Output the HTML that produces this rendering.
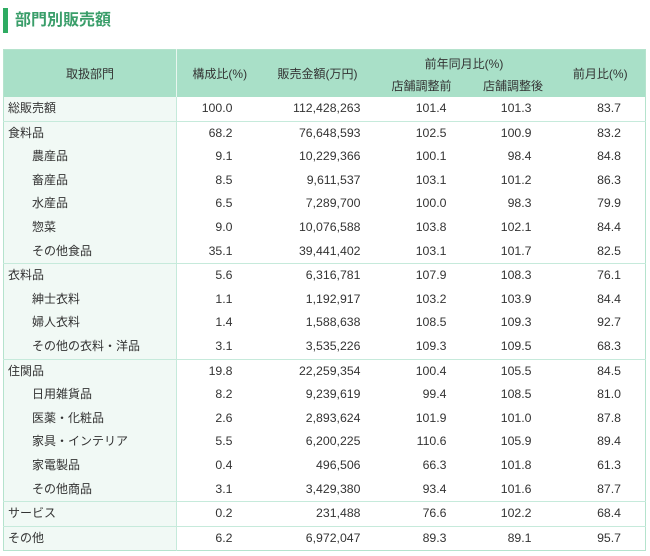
<!DOCTYPE html>
<html><head><meta charset="utf-8"><style>
body{margin:0;background:#fff;font-family:"Liberation Sans","Noto Sans CJK JP",sans-serif;color:#333;font-size:12px;width:650px;height:556px;overflow:hidden;position:relative}
.t{position:absolute;left:3px;top:8px;height:25px;border-left:5px solid #2eab62;padding-left:7px;font-size:16px;font-weight:bold;color:#3a9e6a;line-height:25px}
table{position:absolute;left:3px;top:49px;width:642px;border-collapse:collapse;border:1.5px solid #b5e3cd;table-layout:fixed}
th{background:#a9e0c8;font-weight:normal;color:#333;font-size:12px;padding:0}
td{height:23.6px;padding:0;line-height:23.6px;white-space:nowrap;font-size:12.3px}
td.n{text-align:right;padding-right:24px}
td.a{text-align:right;padding-right:30px}
td.b{text-align:right;padding-right:12px}
td.l{background:#f1f9f5;border-right:1.5px solid #c6eadb;padding-left:4px;font-size:12px}
td.s{padding-left:28px}
tr.g td{border-top:1.5px solid #c6eadb}
th.c1{border-right:1.5px solid #e8f6ef}
</style></head><body>
<div class="t">部門別販売額</div>
<table>
<colgroup><col style="width:173px"><col style="width:86px"><col style="width:110px"><col style="width:98px"><col style="width:85px"><col style="width:90px"></colgroup>
<tr><th rowspan="2" class="c1" style="height:24px">取扱部門</th><th rowspan="2">構成比(%)</th><th rowspan="2">販売金額(万円)</th><th colspan="2" style="height:22px;padding-top:2px">前年同月比(%)</th><th rowspan="2">前月比(%)</th></tr>
<tr><th style="height:23px">店舗調整前</th><th>店舗調整後</th></tr>
<tr><td class="l">総販売額</td><td class="a">100.0</td><td class="b">112,428,263</td><td class="n">101.4</td><td class="n">101.3</td><td class="n">83.7</td></tr>
<tr class="g"><td class="l">食料品</td><td class="a">68.2</td><td class="b">76,648,593</td><td class="n">102.5</td><td class="n">100.9</td><td class="n">83.2</td></tr>
<tr><td class="l s">農産品</td><td class="a">9.1</td><td class="b">10,229,366</td><td class="n">100.1</td><td class="n">98.4</td><td class="n">84.8</td></tr>
<tr><td class="l s">畜産品</td><td class="a">8.5</td><td class="b">9,611,537</td><td class="n">103.1</td><td class="n">101.2</td><td class="n">86.3</td></tr>
<tr><td class="l s">水産品</td><td class="a">6.5</td><td class="b">7,289,700</td><td class="n">100.0</td><td class="n">98.3</td><td class="n">79.9</td></tr>
<tr><td class="l s">惣菜</td><td class="a">9.0</td><td class="b">10,076,588</td><td class="n">103.8</td><td class="n">102.1</td><td class="n">84.4</td></tr>
<tr><td class="l s">その他食品</td><td class="a">35.1</td><td class="b">39,441,402</td><td class="n">103.1</td><td class="n">101.7</td><td class="n">82.5</td></tr>
<tr class="g"><td class="l">衣料品</td><td class="a">5.6</td><td class="b">6,316,781</td><td class="n">107.9</td><td class="n">108.3</td><td class="n">76.1</td></tr>
<tr><td class="l s">紳士衣料</td><td class="a">1.1</td><td class="b">1,192,917</td><td class="n">103.2</td><td class="n">103.9</td><td class="n">84.4</td></tr>
<tr><td class="l s">婦人衣料</td><td class="a">1.4</td><td class="b">1,588,638</td><td class="n">108.5</td><td class="n">109.3</td><td class="n">92.7</td></tr>
<tr><td class="l s">その他の衣料・洋品</td><td class="a">3.1</td><td class="b">3,535,226</td><td class="n">109.3</td><td class="n">109.5</td><td class="n">68.3</td></tr>
<tr class="g"><td class="l">住関品</td><td class="a">19.8</td><td class="b">22,259,354</td><td class="n">100.4</td><td class="n">105.5</td><td class="n">84.5</td></tr>
<tr><td class="l s">日用雑貨品</td><td class="a">8.2</td><td class="b">9,239,619</td><td class="n">99.4</td><td class="n">108.5</td><td class="n">81.0</td></tr>
<tr><td class="l s">医薬・化粧品</td><td class="a">2.6</td><td class="b">2,893,624</td><td class="n">101.9</td><td class="n">101.0</td><td class="n">87.8</td></tr>
<tr><td class="l s">家具・インテリア</td><td class="a">5.5</td><td class="b">6,200,225</td><td class="n">110.6</td><td class="n">105.9</td><td class="n">89.4</td></tr>
<tr><td class="l s">家電製品</td><td class="a">0.4</td><td class="b">496,506</td><td class="n">66.3</td><td class="n">101.8</td><td class="n">61.3</td></tr>
<tr><td class="l s">その他商品</td><td class="a">3.1</td><td class="b">3,429,380</td><td class="n">93.4</td><td class="n">101.6</td><td class="n">87.7</td></tr>
<tr class="g"><td class="l">サービス</td><td class="a">0.2</td><td class="b">231,488</td><td class="n">76.6</td><td class="n">102.2</td><td class="n">68.4</td></tr>
<tr class="g"><td class="l">その他</td><td class="a">6.2</td><td class="b">6,972,047</td><td class="n">89.3</td><td class="n">89.1</td><td class="n">95.7</td></tr>
</table>
</body></html>
